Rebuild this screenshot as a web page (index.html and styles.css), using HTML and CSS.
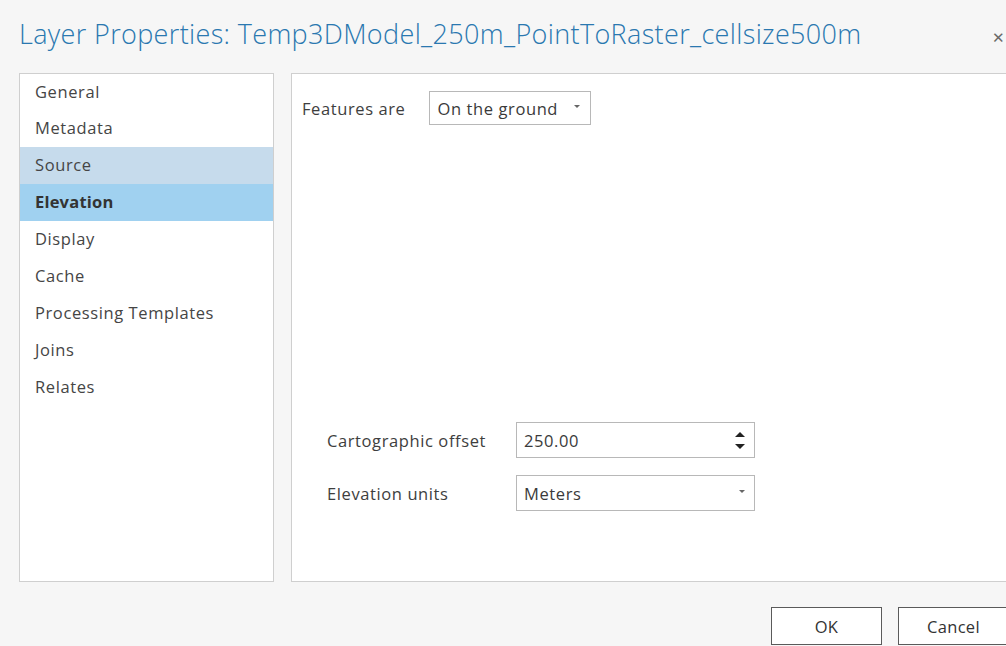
FILE: index.html
```html
<!DOCTYPE html>
<html lang="en">
<head>
<meta charset="utf-8">
<title>Layer Properties</title>
<link rel="stylesheet" href="styles.css">
</head>
<body>
<div class="dialog">
  <header class="dialog-header">
    <h1 class="dialog-title">Layer Properties: Temp3DModel_250m_PointToRaster_cellsize500m</h1>
    <span class="close">&#x2715;</span>
  </header>

  <main class="dialog-body">
    <ul class="nav">
      <li class="nav-item">General</li>
      <li class="nav-item">Metadata</li>
      <li class="nav-item is-hover">Source</li>
      <li class="nav-item is-active">Elevation</li>
      <li class="nav-item">Display</li>
      <li class="nav-item">Cache</li>
      <li class="nav-item">Processing Templates</li>
      <li class="nav-item">Joins</li>
      <li class="nav-item">Relates</li>
    </ul>

    <section class="page">
      <div class="features-row">
        <span class="label">Features are</span>
        <div class="combo combo-small">
          <span class="combo-value">On the ground</span>
          <span class="caret"></span>
        </div>
      </div>

      <div class="offset-grid">
        <span class="label">Cartographic offset</span>
        <div class="combo combo-wide">
          <span class="combo-value">250.00</span>
          <span class="spinner">
            <span class="spin-up"></span>
            <span class="spin-down"></span>
          </span>
        </div>
        <span class="label">Elevation units</span>
        <div class="combo combo-wide">
          <span class="combo-value">Meters</span>
          <span class="caret"></span>
        </div>
      </div>
    </section>
  </main>

  <footer class="dialog-footer">
    <button class="btn">OK</button>
    <button class="btn">Cancel</button>
  </footer>
</div>
</body>
</html>
```

FILE: styles.css
```css
html, body {
  margin: 0;
  padding: 0;
  background: #f6f6f6;
  overflow: hidden;
}

body {
  font-family: "Open Sans", "Noto Sans", sans-serif;
  color: #444;
}

.dialog {
  width: 1024px;
  height: 646px;
  display: flex;
  flex-direction: column;
  padding: 0 15px 0 19px;
  box-sizing: border-box;
}

/* title bar */
.dialog-header {
  height: 73px;
  display: flex;
  align-items: flex-start;
  justify-content: space-between;
}

.dialog-title {
  margin: 15px 0 0 0;
  font-size: 27px;
  font-weight: 300;
  color: #2a78b0;
  letter-spacing: 0.35px;
  white-space: nowrap;
}

.close {
  margin: 27px 4px 0 0;
  font-size: 15px;
  color: #6a6a6a;
}

/* content area: nav list + page */
.dialog-body {
  display: flex;
  gap: 17px;
  height: 509px;
}

.nav {
  list-style: none;
  margin: 0;
  padding: 0;
  width: 255px;
  box-sizing: border-box;
  background: #fff;
  border: 1px solid #cfcfcf;
}

.nav-item {
  height: 37px;
  line-height: 35px;
  padding-left: 15px;
  font-size: 16.5px;
  letter-spacing: 0.6px;
  color: #454545;
}

.nav-item:first-child {
  height: 36px;
}

.nav-item.is-hover {
  background: #c6dbec;
}

.nav-item.is-active {
  background: #a0d1f0;
  font-weight: 700;
  letter-spacing: 0.2px;
  color: #333;
}

.page {
  flex: 1;
  background: #fff;
  border: 1px solid #cfcfcf;
  display: flex;
  flex-direction: column;
  padding: 17px 0 70px 10px;
}

.label {
  font-size: 16.5px;
  letter-spacing: 0.6px;
  color: #3e3e3e;
}

.features-row {
  display: flex;
  align-items: center;
  gap: 23px;
}

.combo {
  display: flex;
  align-items: center;
  justify-content: space-between;
  border: 1px solid #b8b8b8;
  background: #fff;
  box-sizing: border-box;
  font-size: 16.5px;
  letter-spacing: 0.6px;
  color: #3a3a3a;
}

.combo-small {
  width: 162px;
  height: 34px;
  padding: 0 10px 0 8px;
}

.combo-wide {
  width: 239px;
  height: 36px;
  padding: 0 9px 0 7px;
}

.caret {
  width: 0;
  height: 0;
  border-left: 3px solid transparent;
  border-right: 3px solid transparent;
  border-top: 3px solid #666;
  margin-top: -3px;
}

.spinner {
  display: flex;
  flex-direction: column;
  gap: 7px;
}

.spin-up,
.spin-down {
  width: 0;
  height: 0;
  border-left: 5px solid transparent;
  border-right: 5px solid transparent;
}

.spin-up { border-bottom: 5px solid #222; }
.spin-down { border-top: 5px solid #222; }

.offset-grid {
  margin-top: auto;
  margin-left: 25px;
  display: grid;
  grid-template-columns: 189px 239px;
  row-gap: 17px;
  align-items: center;
}

/* footer buttons */
.dialog-footer {
  display: flex;
  justify-content: flex-end;
  gap: 16px;
  padding-top: 25px;
}

.btn {
  width: 111px;
  height: 38px;
  background: #fff;
  border: 1px solid #5a5a5a;
  font-family: "Open Sans", "Noto Sans", sans-serif;
  font-size: 16.5px;
  letter-spacing: 0.3px;
  color: #333;
  padding: 0;
}
```
